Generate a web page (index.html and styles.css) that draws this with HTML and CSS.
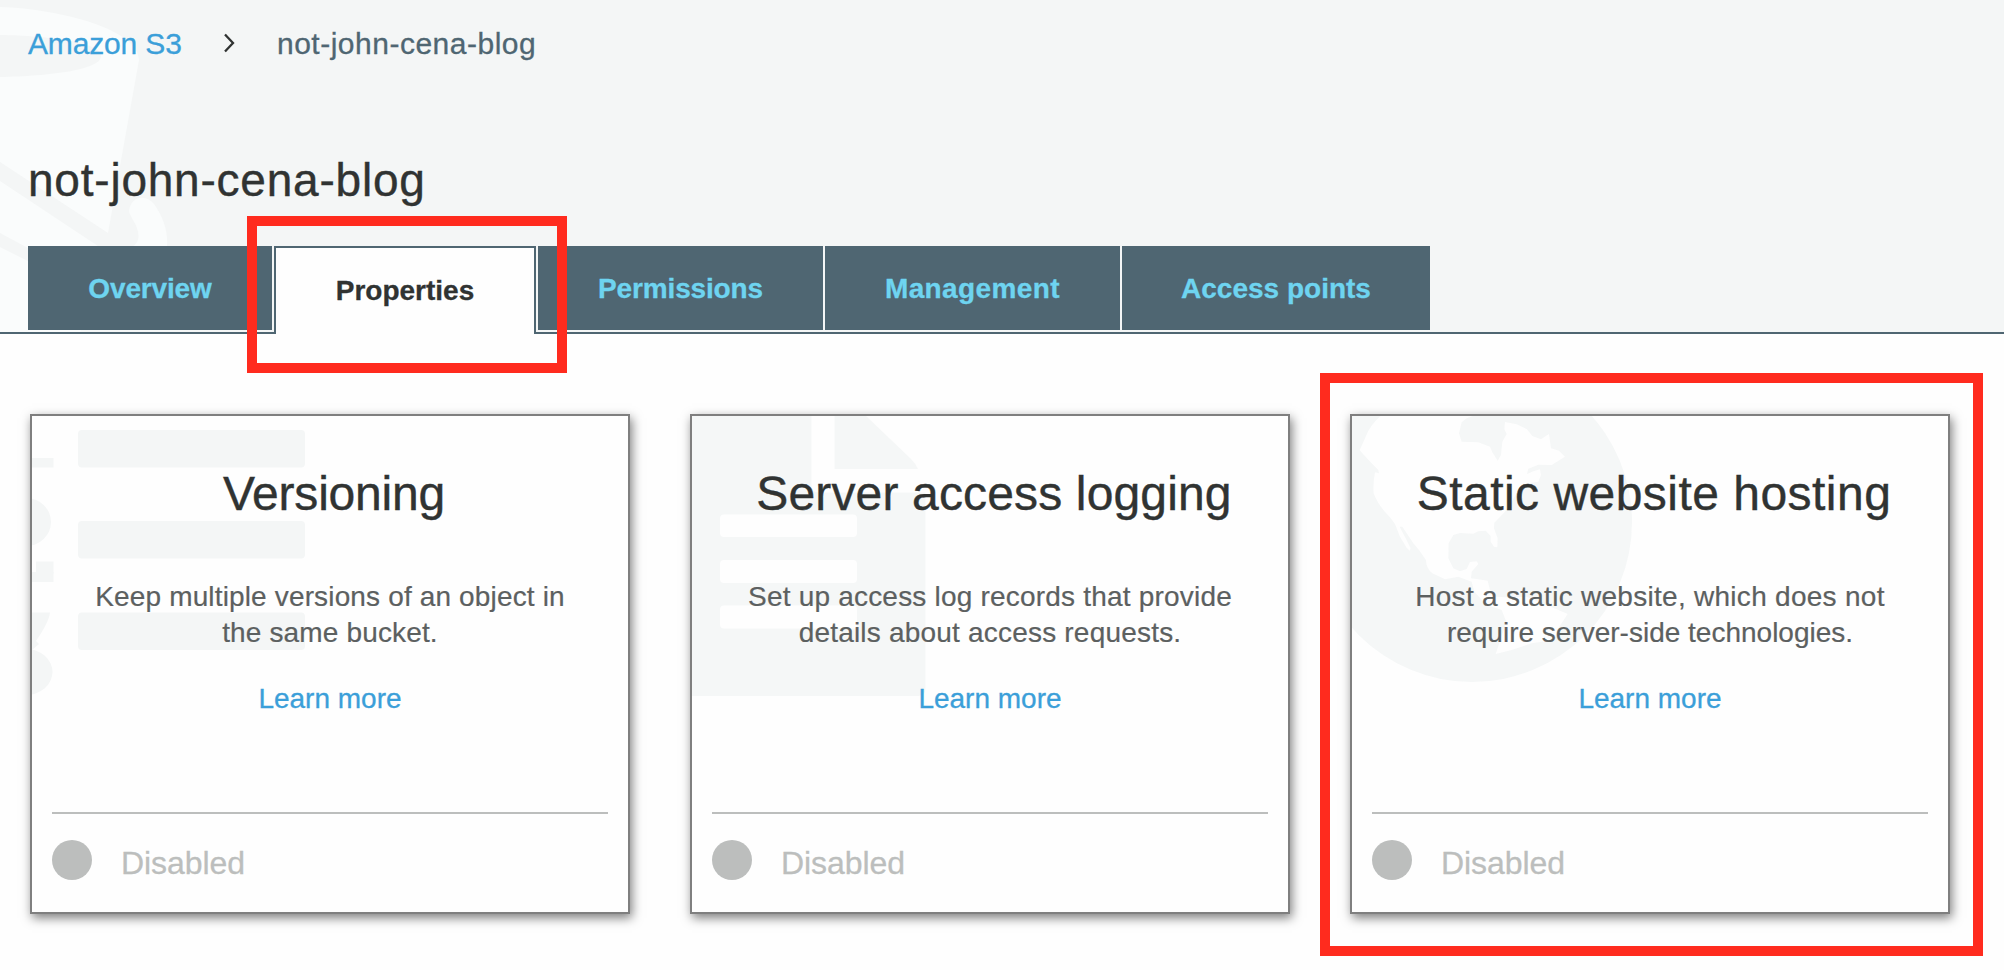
FILE: index.html
```html
<!DOCTYPE html>
<html lang="en">
<head>
<meta charset="utf-8">
<title>not-john-cena-blog</title>
<link rel="stylesheet" href="styles.css">
</head>
<body>
<header class="header">
  <svg class="bucket" width="200" height="332" viewBox="0 0 200 332" fill="#fafcfc">
    <path fill-rule="evenodd" d="M0 7C62 9 139 30 139 60L108 233L0 162ZM0 35C50 36 101 42 101 56S50 76 0 77Z"/>
    <path d="M0 181L98 246C112 252 134 252 138 240C141 228 130 218 129 211C131 196 146 194 154 204C164 218 168 232 167 246L150 300H100L28 248L0 233Z"/>
    <path d="M0 247L28 261L92 300L80 332H0Z"/>
  </svg>
  <nav class="crumbs">
    <a class="crumb-link" href="#">Amazon S3</a>
    <svg class="crumb-sep" width="12" height="20" viewBox="0 0 12 20"><path d="M2 1.5L10 10L2 18.500" fill="none" stroke="#303332" stroke-width="2.300"/></svg>
    <span class="crumb-current">not-john-cena-blog</span>
  </nav>
  <h1 class="title">not-john-cena-blog</h1>
  <nav class="tabs">
    <a class="tab overview">Overview</a>
    <a class="tab active">Properties</a>
    <a class="tab permissions">Permissions</a>
    <a class="tab management">Management</a>
    <a class="tab points">Access points</a>
  </nav>
</header>
<main class="cards">
  <section class="card">
    <svg class="art" width="300" height="300" viewBox="0 0 300 300" fill="#f4f6f6">
      <rect x="46" y="14" width="227" height="37.500" rx="4"/>
      <rect x="46" y="105" width="227" height="37.500" rx="4"/>
      <rect x="46" y="196.500" width="227" height="37.500" rx="4"/>
      <rect x="0" y="42" width="21.500" height="9.500"/>
      <ellipse cx="-6" cy="106" rx="25" ry="24"/>
      <rect x="0" y="156" width="21.500" height="10"/>
      <rect x="4" y="145.500" width="17.500" height="12"/>
      <path d="M0 196.500H18Q17 206 4 225L7 228L0 234Z"/>
      <ellipse cx="-6" cy="256" rx="26.500" ry="23"/>
    </svg>
    <h2 class="name versioning">Versioning</h2>
    <p class="desc keep">Keep multiple versions of an object in<br>the same bucket.</p>
    <a class="more" href="#">Learn more</a>
    <footer class="status"><i class="dot"></i><span>Disabled</span></footer>
  </section>
  <section class="card">
    <svg class="art" width="300" height="300" viewBox="0 0 300 300" fill="#f5f7f7">
      <path fill-rule="evenodd" d="M0 0H119.500V69Q119.500 76.500 127 76.500H233.500V272Q233.500 280 226 280H0ZM32 98.500a4 4 0 0 0-4 4v14.500a4 4 0 0 0 4 4H161a4 4 0 0 0 4-4V102.500a4 4 0 0 0-4-4ZM32 144a4 4 0 0 0-4 4v15a4 4 0 0 0 4 4H161a4 4 0 0 0 4-4V148a4 4 0 0 0-4-4ZM32 189.500a4 4 0 0 0-4 4v15a4 4 0 0 0 4 4H161a4 4 0 0 0 4-4V193.500a4 4 0 0 0-4-4Z"/>
      <path d="M142.500 0H174L219 43Q223 47 226 53H142.500Z"/>
    </svg>
    <h2 class="name logging">Server access logging</h2>
    <p class="desc setup">Set up access log records that provide<br>details about access requests.</p>
    <a class="more" href="#">Learn more</a>
    <footer class="status"><i class="dot"></i><span>Disabled</span></footer>
  </section>
  <section class="card">
    <svg class="art" width="300" height="300" viewBox="0 0 300 300">
      <circle cx="120" cy="106" r="160" fill="#f5f7f7"/>
      <g transform="translate(-7 -6) scale(.3333)" fill="#fefefe">
        <path d="M110 15Q75 45 62 80Q52 103 44 120Q62 142 100 180L102 190L90 187Q84 215 86 250Q98 285 135 322L150 342L165 380L185 413L194 422L197 415L182 385L164 350L172 350L205 400L222 420L243 450Q243 475 262 490L300 508L340 500L380 515L388 545L425 585L470 600L484 635L468 685L452 732L500 720L560 700L628 690L640 655L668 612L635 598L590 580L545 560L480 562L450 560L435 540L428 512L400 508L378 505L380 485L400 462L395 454L375 456L365 477L345 484L325 475L310 445L311 400L325 375L345 369L385 371L400 364L422 362L437 378L437 395L447 410L457 412L458 385L447 355L448 338L480 305L495 285L520 240L550 220L580 215L588 195L585 178L565 184L546 192L550 176L580 164L620 165L660 140L642 122L618 115L612 72L588 88L562 78L545 57L515 43L480 36L478 58L485 72L472 95L468 135L458 152L443 128L435 110L400 97L350 95L342 70L350 37L365 25L392 15Z"/>
      </g>
    </svg>
    <h2 class="name hosting">Static website hosting</h2>
    <p class="desc host">Host a static website, which does not<br><span class="tight">require server-side technologies.</span></p>
    <a class="more" href="#">Learn more</a>
    <footer class="status"><i class="dot"></i><span>Disabled</span></footer>
  </section>
</main>
<div class="mark mark-tab"></div>
<div class="mark mark-card"></div>
</body>
</html>
```

FILE: styles.css
```css
* { box-sizing: border-box; }
body { margin: 0; width: 2004px; height: 970px; overflow: hidden; position: relative; background: #fefefe; font-family: "Liberation Sans", Arial, sans-serif; color: #303332; }
a { text-decoration: none; }
.header { position: relative; height: 334px; background: #f4f6f6; border-bottom: 2px solid #4f6672; padding: 27px 28px 0; }
.bucket { position: absolute; left: 0; top: 0; }
.crumbs { position: relative; display: flex; align-items: center; height: 34px; font-size: 30px; line-height: 34px; -webkit-text-stroke: .3px; }
.crumb-link { width: 195px; color: #3b9fd9; letter-spacing: -.15px; }
.crumb-sep { margin: -2px 42px 0 0; }
.crumb-current { color: #4f6672; letter-spacing: .5px; }
.title { position: relative; margin: 93px 0 0; height: 52px; font-size: 46px; line-height: 52px; font-weight: 400; letter-spacing: .78px; -webkit-text-stroke: .4px; }
.tabs { position: relative; display: flex; margin-top: 40px; height: 88px; gap: 2px; }
.tab { height: 84px; display: flex; justify-content: center; background: #4f6672; color: #6ed4f0; font-size: 28px; font-weight: 700; line-height: 86px; -webkit-text-stroke: .3px; }
.overview { width: 244px; letter-spacing: -.15px; }
.active { width: 262px; height: 88px; line-height: 86px; background: #fefefe; color: #303332; border: 2px solid #4f6672; border-bottom: 0; }
.permissions { width: 285px; letter-spacing: -.15px; }
.management { width: 295px; letter-spacing: .4px; }
.points { width: 308px; }
.cards { display: flex; gap: 60px; padding: 80px 30px 0; }
.card { position: relative; width: 600px; height: 500px; flex: none; border: 2px solid #7f7f7f; background: #fefefe; box-shadow: 2px 4px 10px rgba(0,0,0,.5); display: flex; flex-direction: column; align-items: center; padding: 50px 20px 0; }
.art { position: absolute; left: 0; top: 0; }
.name { position: relative; margin: 0; padding-left: 8px; font-size: 48px; line-height: 56px; font-weight: 400; white-space: nowrap; -webkit-text-stroke: .4px; }
.versioning { letter-spacing: -.2px; }
.logging { letter-spacing: .15px; }
.hosting { letter-spacing: .47px; padding-left: 8px; }
.desc { position: relative; margin: 57px 0 0; font-size: 28px; line-height: 36px; color: #5c6060; text-align: center; white-space: nowrap; -webkit-text-stroke: .2px; }
.keep { letter-spacing: .15px; }
.setup { letter-spacing: .2px; }
.host { letter-spacing: .28px; }
.tight { letter-spacing: 0; }
.more { position: relative; margin-top: 30px; font-size: 28px; line-height: 36px; color: #3b9fd9; -webkit-text-stroke: .3px; }
.status { align-self: stretch; margin-top: 95px; border-top: 2px solid #bcbebd; padding-top: 26px; display: flex; gap: 29px; font-size: 32px; line-height: 47px; color: #bcbebd; letter-spacing: -.05px; -webkit-text-stroke: .3px; }
.dot { width: 40px; height: 40px; border-radius: 50%; background: #bcbebd; }
.mark { position: absolute; border: 10px solid #ff2b1e; }
.mark-tab { left: 247px; top: 216px; width: 320px; height: 157px; }
.mark-card { left: 1320px; top: 373px; width: 663px; height: 583px; }
```
